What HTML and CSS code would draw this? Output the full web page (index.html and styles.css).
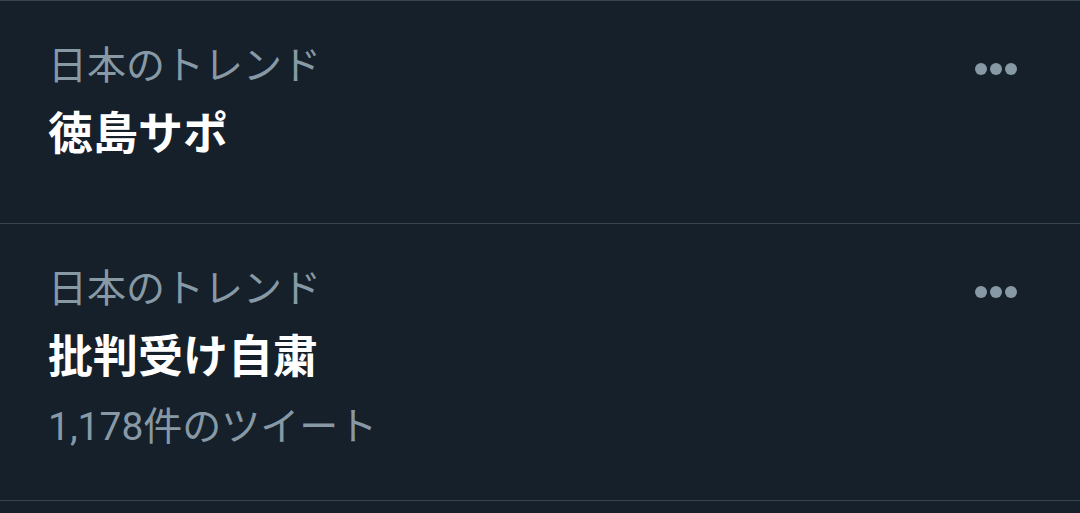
FILE: index.html
```html
<!DOCTYPE html>
<html lang="ja">
<head>
    <meta charset="UTF-8">
    <meta name="viewport" content="width=device-width, initial-scale=1.0">
    <title>トレンド</title>
    <link rel="stylesheet" href="styles.css">
</head>
<body>
    <div class="trends">
        <div class="trend">
            <div class="trend_body">
                <p class="trend_label">日本のトレンド</p>
                <p class="trend_title">徳島サポ</p>
            </div>
            <svg class="trend_more" width="42" height="12" viewBox="0 0 42 12">
                <circle cx="6" cy="6" r="6"/>
                <circle cx="21" cy="6" r="6"/>
                <circle cx="36" cy="6" r="6"/>
            </svg>
        </div>
        <div class="trend">
            <div class="trend_body">
                <p class="trend_label">日本のトレンド</p>
                <p class="trend_title">批判受け自粛</p>
                <p class="trend_count">1,178件のツイート</p>
            </div>
            <svg class="trend_more" width="42" height="12" viewBox="0 0 42 12">
                <circle cx="6" cy="6" r="6"/>
                <circle cx="21" cy="6" r="6"/>
                <circle cx="36" cy="6" r="6"/>
            </svg>
        </div>
    </div>
</body>
</html>
```

FILE: styles.css
```css
* { box-sizing: border-box; }
body { margin: 0; background-color: #15202b; font-family: Roboto, "Noto Sans CJK JP", sans-serif; }
.trends { border-top: 1px solid #38444d; }
.trend { display: flex; align-items: flex-start; min-height: 223px; padding: 37px 63px 45px 48px; border-bottom: 1px solid #38444d; }
.trend_body { flex: 1; }
.trend_label { margin: 0; font-size: 39px; line-height: 56px; color: #8899a6; }
.trend_title { margin: 3px 0 0; font-size: 45px; line-height: 76px; font-weight: bold; color: #ffffff; }
.trend_count { margin: 3px 0 0; font-size: 39px; line-height: 56px; color: #8899a6; }
.trend_more { margin-top: 25px; fill: #8899a6; }
```
